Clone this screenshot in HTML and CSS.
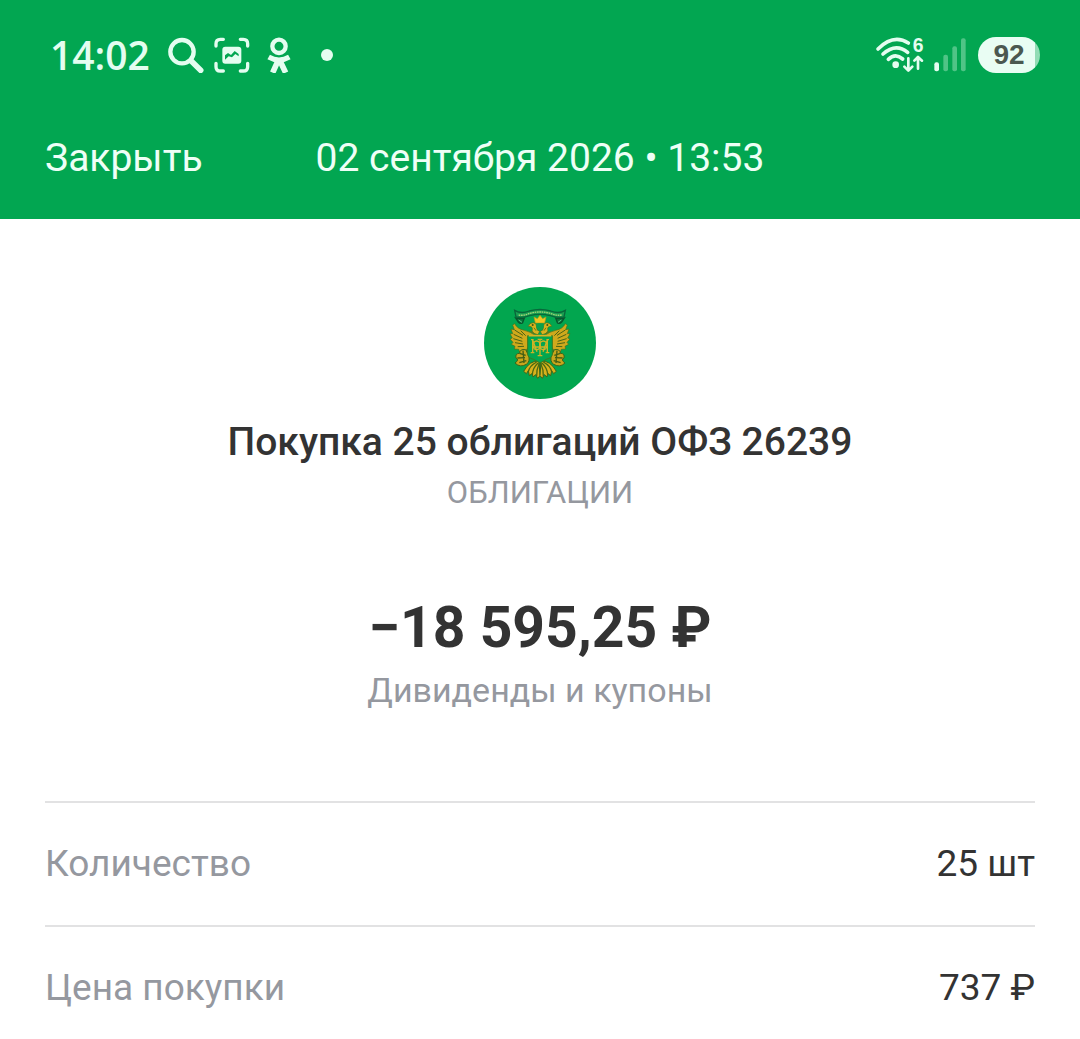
FILE: index.html
```html
<!DOCTYPE html>
<html lang="ru">
<head>
    <meta charset="UTF-8">
    <meta name="viewport" content="width=device-width, initial-scale=1.0">
    <title>Покупка облигаций</title>
    <link rel="stylesheet" href="styles.css">
</head>
<body>
    <header class="header">
        <div class="status-bar">
            <div class="status-left">
                <span class="time">14:02</span>
                <svg class="icon-search" viewBox="382 36 108 108" aria-hidden="true">
                    <circle cx="424" cy="80" r="35" fill="none" stroke="#e4fdf0" stroke-width="13"/>
                    <path d="M451 107 L480 136" stroke="#e4fdf0" stroke-width="17" stroke-linecap="round"/>
                </svg>
                <svg class="icon-capture" viewBox="524 37 108 108" aria-hidden="true">
                    <g fill="none" stroke="#e4fdf0" stroke-width="10" stroke-linecap="round">
                        <path d="M530 64 V57 Q530 44 543 44 H552"/>
                        <path d="M603 44 H612 Q625 44 625 57 V64"/>
                        <path d="M625 116 V126 Q625 139 612 139 H603"/>
                        <path d="M552 139 H543 Q530 139 530 126 V116"/>
                    </g>
                    <rect x="549" y="66" width="57" height="51" rx="9" fill="#e4fdf0"/>
                    <path d="M557 105 V92 L566 85 L575 91 L586 79 L598 88 V95 L588 88 L578 98 L568 95 Z" fill="#02a651"/>
                </svg>
                <svg class="icon-ok" viewBox="682 37 72 108" aria-hidden="true">
                    <g fill="none" stroke="#e4fdf0">
                        <circle cx="718" cy="65" r="20" stroke-width="13"/>
                        <path d="M687 97 Q718 115 749 97" stroke-width="15"/>
                        <path d="M718 102 L699 144 M718 102 L738 144" stroke-width="17"/>
                    </g>
                </svg>
                <span class="dot"></span>
            </div>
            <div class="status-right">
                <svg class="icon-wifi" viewBox="32 37 144 108" aria-hidden="true">
                    <g fill="none" stroke="#e4fdf0" stroke-width="11" stroke-linecap="round">
                        <path d="M38 73 Q84 27 129 55"/>
                        <path d="M53 88 Q91 54 127 83"/>
                        <path d="M69 104 Q90 84 112 103"/>
                    </g>
                    <circle cx="91" cy="120" r="10" fill="#e4fdf0"/>
                    <g fill="none" stroke="#e4fdf0" stroke-width="8" stroke-linecap="round" stroke-linejoin="round">
                        <path d="M129 101 V137 M117 126 L129 138 L141 126"/>
                        <path d="M158 132 V97 M147 108 L158 97 L170 108"/>
                    </g>
                    <text class="wifi-gen" x="142" y="82">6</text>
                </svg>
                <svg class="icon-signal" viewBox="208 38 96 108" aria-hidden="true">
                    <rect x="209" y="114" width="14" height="27" rx="6" fill="#e4fdf0"/>
                    <g fill="#4fc486">
                        <rect x="236" y="91" width="14" height="50" rx="6"/>
                        <rect x="263" y="66" width="14" height="75" rx="6"/>
                        <rect x="289" y="42" width="14" height="99" rx="6"/>
                    </g>
                </svg>
                <span class="battery">92</span>
            </div>
        </div>
        <nav class="nav">
            <button type="button" class="close">Закрыть</button>
            <span class="date">02 сентября 2026 • 13:53</span>
        </nav>
    </header>

    <main class="content">
        <svg class="logo" viewBox="12 12 336 336" role="img" aria-label="ОФЗ">
            <defs>
                <!-- left half of the eagle, mirrored for the right one -->
                <g id="half">
                    <path d="M170 160 Q150 145 133 142 Q112 138 104 122 L98 126 L103 140 L93 138 L98 152 L90 152 L97 165 L90 168 L99 178 L94 184 L105 190 L103 198 L116 199 L119 207 L136 205 L148 188 Z" fill="#cfa91c" stroke="#4b6e1c" stroke-width="2"/>
                    <path d="M104 141 L129 157 M101 154 L127 166 M100 167 L127 175 M105 179 L129 183 M113 191 L132 190 M122 143 L137 158" stroke="#4b6415" stroke-width="3"/>
                    <path d="M174 155 Q153 152 157 136 Q157 130 145 130 Q148 119 160 119 Q171 120 170 133 Q169 143 179 145 Z" fill="#d9b31d" stroke="#4b6e1c" stroke-width="2"/>
                    <circle cx="158" cy="126" r="3" fill="#3c5616"/>
                    <path d="M151 145 L166 153 M162 134 L168 143" stroke="#6d7415" stroke-width="3"/>
                    <path d="M137 200 Q119 197 119 211 Q105 211 108 225 Q119 230 105 240 Q120 255 139 244 Q152 235 145 216 Z" fill="#c7a51c" stroke="#3c6418" stroke-width="3"/>
                    <path d="M119 211 L137 217 M112 225 L135 224 M118 239 L139 233 M129 203 L132 240" stroke="#435f14" stroke-width="4"/>
                    <path d="M177 234 Q149 232 131 265 L139 272 L145 263 L148 278 L157 271 L159 282 L167 275 L173 286 L180 278 Z" fill="#d8b21c" stroke="#3c6418" stroke-width="3"/>
                    <path d="M170 237 Q149 248 145 266 M174 240 Q158 255 157 275 M178 240 Q169 260 170 280" fill="none" stroke="#4b6a12" stroke-width="4"/>
                    <path d="M107 105 Q120 109 133 105 L128 119 Q121 124 115 117 Z" fill="#08783d" stroke="#08552d" stroke-width="4"/>
                    <path d="M116 111 L126 118" stroke="#52c483" stroke-width="3"/>
                </g>
            </defs>
            <circle cx="180" cy="180" r="168" fill="#02a64f"/>
            <use href="#half"/>
            <use href="#half" transform="matrix(-1 0 0 1 360 0)"/>
            <path d="M166 120 L162 102 L172 107 L180 97 L188 107 L198 102 L194 120 Z" fill="#f0c621" stroke="#b69a16" stroke-width="2"/>
            <path d="M169 123 Q180 119 191 123 V134 L180 142 L169 134 Z" fill="#0ba14a"/>
            <path d="M104 82 Q123 94 148 84 Q180 75 212 84 Q237 94 256 82 L252 102 Q231 106 211 98 Q180 90 149 98 Q129 106 108 102 Z" fill="#199e51" stroke="#08673a" stroke-width="4"/>
            <path d="M116 96 Q133 99 149 91 Q180 83 211 91 Q229 99 245 96" fill="none" stroke="#a0d475" stroke-width="4" stroke-dasharray="5 2"/>
            <path d="M143 158 H217 V214 Q216 225 199 229 L180 240 L161 229 Q144 225 143 214 Z" fill="#02a64f" stroke="#3f7a1e" stroke-width="3"/>
            <path d="M146 158 H214" stroke="#d8b526" stroke-width="5"/>
            <g fill="none" stroke="#cfb326" stroke-width="4">
                <ellipse cx="170" cy="187" rx="11" ry="13"/>
                <ellipse cx="190" cy="187" rx="11" ry="13"/>
                <path d="M180 168 V218 M173 169 H187 M173 218 H187"/>
                <path d="M158 170 V209 M202 170 V209 M158 171 L171 206 M202 171 L189 206 M158 192 H202 M152 209 H163 M197 209 H208 M153 170 H161 M199 170 H207"/>
            </g>
        </svg>
        <h1 class="title">Покупка 25 облигаций ОФЗ 26239</h1>
        <p class="kind">ОБЛИГАЦИИ</p>
        <p class="amount">−18 595,25 ₽</p>
        <p class="account">Дивиденды и купоны</p>

        <dl class="details">
            <div class="row">
                <dt>Количество</dt>
                <dd>25 шт</dd>
            </div>
            <div class="row">
                <dt>Цена покупки</dt>
                <dd>737 ₽</dd>
            </div>
        </dl>
    </main>
</body>
</html>
```
FILE: styles.css
```css
body {
    font-family: Roboto, "Liberation Sans", sans-serif;
    margin: 0;
    background-color: #fff;
    color: #333;
}
svg {
    display: block;
}
.header {
    background-color: #02a651;
    color: #eefff6;
}
.status-bar {
    display: flex;
    justify-content: space-between;
    align-items: center;
    height: 110px;
    padding: 0 40px 0 50px;
}
.status-left, .status-right {
    display: flex;
    align-items: center;
}
.time {
    font-family: "Open Sans", sans-serif;
    font-size: 39px;
    font-weight: 600;
    line-height: 48px;
    color: #e4fdf0;
}
.icon-search {
    width: 36px;
    height: 36px;
    margin-left: 18px;
}
.icon-capture {
    width: 36px;
    height: 36px;
    margin-left: 10px;
}
.icon-ok {
    width: 24px;
    height: 36px;
    margin-left: 17px;
}
.dot {
    width: 12px;
    height: 12px;
    margin-left: 30px;
    border-radius: 50%;
    background-color: #e4fdf0;
}
.icon-wifi {
    width: 48px;
    height: 36px;
    margin-right: 10px;
    overflow: visible;
}
.wifi-gen {
    font-family: "Liberation Sans", sans-serif;
    font-size: 58px;
    font-weight: 700;
    fill: #e4fdf0;
}
.icon-signal {
    width: 32px;
    height: 36px;
    margin-right: 12px;
}
.battery {
    box-sizing: border-box;
    width: 62px;
    height: 36px;
    border-radius: 18px;
    background: linear-gradient(to right, #e9fdf3 92%, #92dcb5 92%);
    color: #4b5850;
    font-family: "Liberation Sans", sans-serif;
    font-size: 28px;
    font-weight: 700;
    line-height: 36px;
    text-align: center;
}
.nav {
    display: grid;
    grid-template-columns: 1fr auto 1fr;
    align-items: center;
    padding: 24px 45px 37px;
    font-size: 39px;
    line-height: 48px;
}
.close {
    justify-self: start;
    padding: 0;
    border: none;
    background: none;
    color: inherit;
    font: inherit;
    cursor: pointer;
}
.content {
    padding: 68px 45px 0;
    text-align: center;
}
.logo {
    width: 112px;
    height: 112px;
    margin: 0 auto;
}
.title {
    margin: 19px 0 0;
    font-size: 39px;
    font-weight: 500;
    line-height: 48px;
}
.kind, .account {
    margin: 0;
    color: #95989f;
}
.kind {
    margin-top: 7px;
    font-size: 31px;
    line-height: 40px;
}
.amount {
    margin: 83px 0 0;
    font-size: 57px;
    font-weight: 700;
    line-height: 64px;
}
.account {
    margin-top: 10px;
    font-size: 34px;
    line-height: 40px;
}
.details {
    margin: 91px 0 0;
    font-size: 37px;
    line-height: 42px;
}
.row {
    display: flex;
    justify-content: space-between;
    padding: 40px 0;
    border-top: 2px solid #e2e2e3;
}
.row:last-child {
    padding-bottom: 24px;
}
.row dt {
    color: #95989f;
}
.row dd {
    margin: 0;
}
```
